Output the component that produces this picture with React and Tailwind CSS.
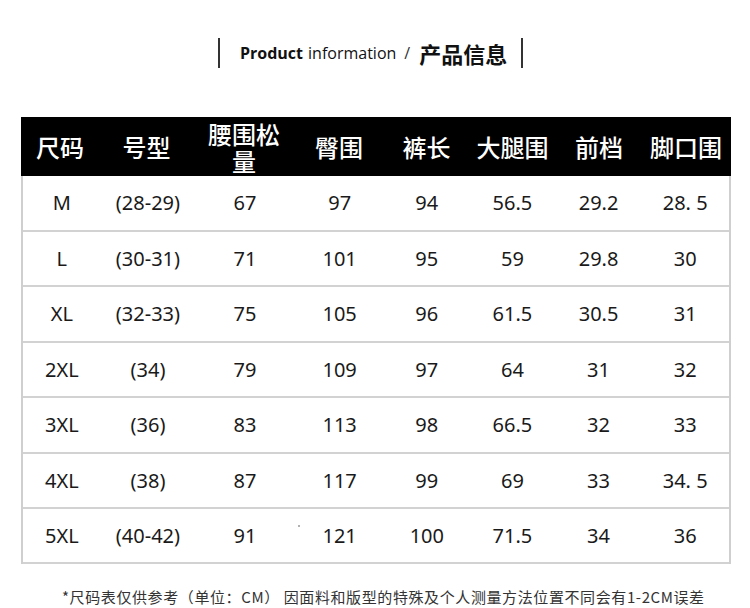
const cols = ["w-[78px]", "w-[95px]", "w-[100px]", "w-[90px]", "w-[85px]", "w-[87px]", "w-[86px]", "w-[88px]"];

const headers = ["尺码", "号型", "腰围松量", "臀围", "裤长", "大腿围", "前档", "脚口围"];

const rows = [
  { h: "h-[56px]", cells: ["M", "(28-29)", "67", "97", "94", "56.5", "29.2", "28. 5"] },
  { h: "h-[55px]", cells: ["L", "(30-31)", "71", "101", "95", "59", "29.8", "30"] },
  { h: "h-[56px]", cells: ["XL", "(32-33)", "75", "105", "96", "61.5", "30.5", "31"] },
  { h: "h-[55px]", cells: ["2XL", "(34)", "79", "109", "97", "64", "31", "32"] },
  { h: "h-[56px]", cells: ["3XL", "(36)", "83", "113", "98", "66.5", "32", "33"] },
  { h: "h-[55px]", cells: ["4XL", "(38)", "87", "117", "99", "69", "33", "34. 5"] },
  { h: "h-[55px]", cells: ["5XL", "(40-42)", "91", "121", "100", "71.5", "34", "36"] },
];

const App = () => {
  return (
    <div className="w-[750px] h-[608px] bg-white overflow-hidden font-['Noto_Sans','Noto_Sans_CJK_SC',sans-serif] text-[#1a1a1a]">
      {/* Title */}
      <div className="flex items-center pt-[38px] pl-[218px] h-[68px]">
        <div className="w-[2px] h-[30px] bg-[#333]" />
        <div className="flex items-center ml-[20px] font-['Open_Sans','Noto_Sans_CJK_SC',sans-serif] text-[16px] text-[#111]">
          <span className="font-bold">Product</span>
          <span className="ml-[5px]">information</span>
          <span className="ml-[8px] text-[#333]">/</span>
          <span className="ml-[9px] font-['Noto_Sans_CJK_SC',sans-serif] font-bold text-[22px]">产品信息</span>
        </div>
        <div className="w-[2px] h-[30px] bg-[#333] ml-[14px]" />
      </div>

      {/* Table */}
      <div className="mt-[49px] ml-[21px] w-[710px]">
        <div className="flex h-[59px] bg-black text-white font-['Noto_Sans_CJK_SC',sans-serif] font-medium text-[24px]">
          {headers.map((t, i) => (
            <div key={i} className={`${cols[i]} flex items-center justify-center text-center leading-[27px] ${i === 2 ? "px-[10px]" : ""}`}>
              {t}
            </div>
          ))}
        </div>
        <div className="border-l-2 border-r-2 border-[#cfcfcf] relative">
          {rows.map((r, ri) => (
            <div key={ri} className={`flex ${r.h} border-b-2 border-[#d2d2d2] text-[20px]`}>
              {r.cells.map((c, ci) => (
                <div key={ci} className={`${cols[ci]} flex items-center justify-center`}>
                  {c}
                </div>
              ))}
            </div>
          ))}
          <div className="absolute left-[275px] bottom-[37px] w-[2px] h-[2px] rounded-full bg-[#999]" />
        </div>
      </div>

      {/* Footer */}
      <div className="mt-[22px] pl-[62px] text-[15px] tracking-[0.6px] text-[#333] font-['Noto_Sans_CJK_SC',sans-serif] whitespace-nowrap">
        *尺码表仅供参考（单位：CM） 因面料和版型的特殊及个人测量方法位置不同会有1-2CM误差
      </div>
    </div>
  );
};

export default App;
